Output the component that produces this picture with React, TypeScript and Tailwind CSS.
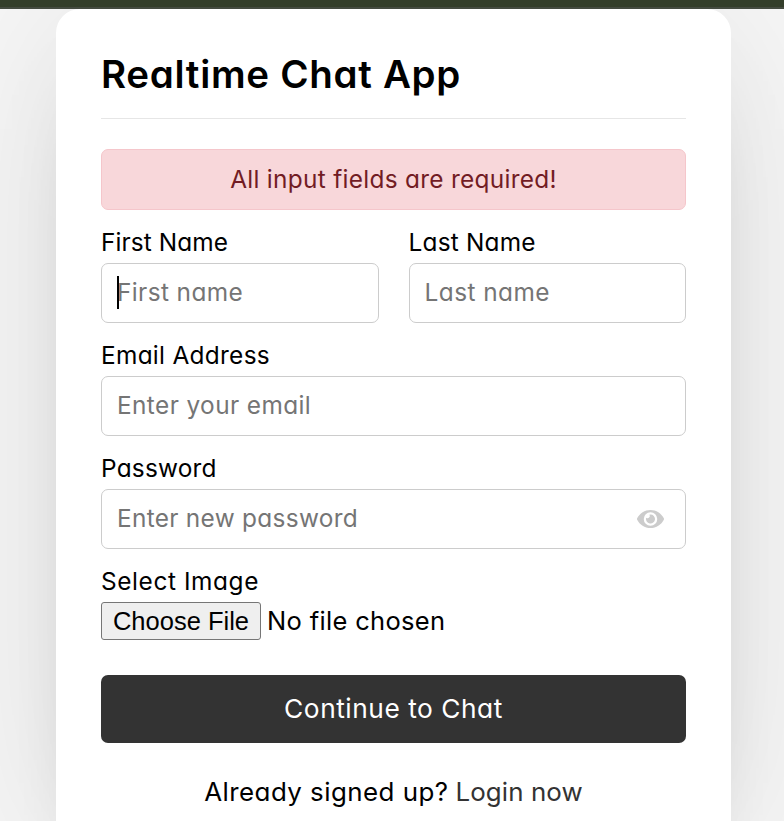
import type { ReactNode } from "react";
import { FaEye } from "react-icons/fa";

function Field({ label, placeholder, labelClass, textClass, caret, icon }: {
  label: string;
  placeholder: string;
  labelClass: string;
  textClass: string;
  caret?: boolean;
  icon?: ReactNode;
}) {
  return (
    <div className="flex min-w-0 flex-1 flex-col">
      <div className={`h-[38px] whitespace-nowrap text-[24.4px] leading-[34px] text-black ${labelClass}`}>{label}</div>
      <div className="relative flex h-[60px] items-center justify-between rounded-[7px] border border-[#ccc] pr-[21.5px] pl-[15px]">
        <span className={`pb-[2px] whitespace-nowrap text-[24.4px] leading-[36px] text-[#757575] ${textClass}`}>{placeholder}</span>
        {caret && <span className="absolute top-[12px] left-[15px] h-[33px] w-[2px] bg-black" />}
        {icon}
      </div>
    </div>
  );
}

export default function App() {
  return (
    <div className="h-[821px] w-[784px] overflow-hidden bg-[#f7f7f7] font-['Inter','Liberation_Sans',sans-serif] [font-feature-settings:'cv11']">
      <div className="relative z-10 h-[9px] border-b-2 border-[#444b40] bg-[#333e2a]" />
      <main className="ml-[56px] h-[846px] w-[675px] rounded-[24px] bg-white px-[45px] pt-[37px] shadow-[0_0_192px_0_rgba(0,0,0,0.1),0_48px_96px_-72px_rgba(0,0,0,0.5)]">
        <header className="h-[73px] border-b border-[#e6e6e6] text-[38.5px] leading-[56px] font-semibold text-black">
          <span className="whitespace-nowrap tracking-[0.7px]">Realtime Chat App</span>
        </header>
        <form>
          <div className="mt-[30px] flex h-[61px] items-center justify-center rounded-[7px] border border-[#f5c6cb] bg-[#f8d7da] text-[24.4px] text-[#721c24]">
            <span className="whitespace-nowrap tracking-[0.3px]">All input fields are required!</span>
          </div>
          <div className="mt-[15px] flex gap-[30px]">
            <Field label="First Name" placeholder="First name" labelClass="tracking-[0.1px]" textClass="tracking-[0.4px]" caret />
            <Field label="Last Name" placeholder="Last name" labelClass="tracking-[0.2px]" textClass="tracking-[0.45px]" />
          </div>
          <div className="mt-[15px] flex">
            <Field label="Email Address" placeholder="Enter your email" labelClass="tracking-[0.3px]" textClass="tracking-[0.4px]" />
          </div>
          <div className="mt-[15px] flex">
            <Field
              label="Password"
              placeholder="Enter new password"
              labelClass="tracking-[0.22px]"
              textClass="tracking-[0.3px]"
              icon={<FaEye className="h-[24px] w-[27px] text-[#ccc]" />}
            />
          </div>
          <div className="mt-[15px] h-[38px] text-[24.4px] leading-[34px] text-black">
            <span className="whitespace-nowrap tracking-[0.6px]">Select Image</span>
          </div>
          <div className="flex h-[38px] items-center text-[25.5px] text-black">
            <button type="button" className="h-[38px] w-[160px] rounded-[3px] border border-[#767676] bg-[#efefef] font-['Liberation_Sans',Arial,sans-serif] leading-[34px] whitespace-nowrap">
              Choose File
            </button>
            <span className="ml-[6px] whitespace-nowrap tracking-[0.33px]">No file chosen</span>
          </div>
          <button type="button" className="mt-[35px] flex h-[68px] w-full items-center justify-center rounded-[7px] bg-[#333] pb-[1px] text-[26.3px] text-white">
            <span className="whitespace-nowrap tracking-[0.53px]">Continue to Chat</span>
          </button>
        </form>
        <div className="mt-[30px] flex h-[38px] items-center justify-center gap-[7px] text-[25.9px] whitespace-nowrap text-black">
          <span className="tracking-[0.46px]">Already signed up?</span>
          <a className="tracking-[0.1px] text-[#333]">Login now</a>
        </div>
      </main>
    </div>
  );
}
